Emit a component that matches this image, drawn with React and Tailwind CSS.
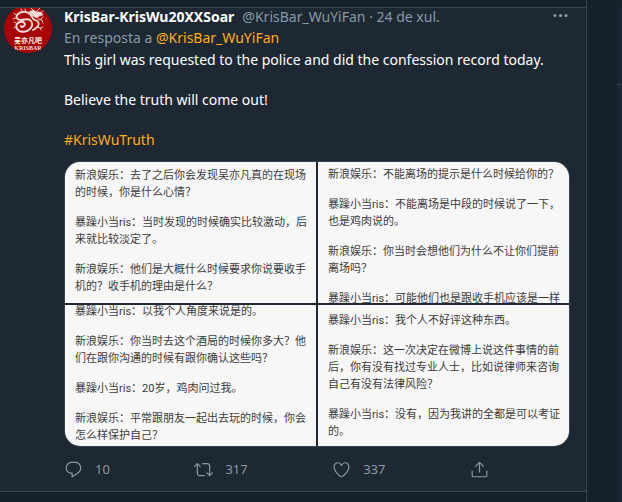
const REPLY =
  "M14.046 2.242l-4.148-.01h-.002c-4.374 0-7.8 3.427-7.8 7.802 0 4.098 3.186 7.206 7.465 7.37v3.828c0 .108.044.286.12.403.142.225.384.347.632.347.138 0 .277-.038.402-.118.264-.168 6.473-4.14 8.088-5.506 1.902-1.61 3.04-3.97 3.043-6.312v-.017c-.006-4.367-3.43-7.787-7.8-7.788zm3.787 12.972c-1.134.96-4.862 3.405-6.772 4.643V16.67c0-.414-.335-.75-.75-.75h-.396c-3.66 0-6.318-2.476-6.318-5.886 0-3.534 2.768-6.302 6.3-6.302l4.147.01h.002c3.532 0 6.3 2.766 6.302 6.296-.003 1.91-.942 3.844-2.514 5.176z";
const RETWEET =
  "M23.77 15.67c-.292-.293-.767-.293-1.06 0l-2.22 2.22V7.65c0-2.068-1.683-3.75-3.75-3.75h-5.85c-.414 0-.75.336-.75.75s.336.75.75.75h5.85c1.24 0 2.25 1.01 2.25 2.25v10.24l-2.22-2.22c-.293-.293-.768-.293-1.06 0s-.294.768 0 1.06l3.5 3.5c.145.147.337.22.53.22s.383-.072.53-.22l3.5-3.5c.294-.292.294-.767 0-1.06zm-10.66 3.28H7.26c-1.24 0-2.25-1.01-2.25-2.25V6.46l2.22 2.22c.148.147.34.22.532.22s.384-.073.53-.22c.293-.293.293-.768 0-1.06l-3.5-3.5c-.293-.294-.768-.294-1.06 0l-3.5 3.5c-.294.292-.294.767 0 1.06s.767.293 1.06 0l2.22-2.22V16.7c0 2.068 1.683 3.75 3.75 3.75h5.85c.414 0 .75-.336.75-.75s-.337-.75-.75-.75z";
const HEART =
  "M12 21.638h-.014C9.403 21.59 1.95 14.856 1.95 8.478c0-3.064 2.525-5.754 5.403-5.754 2.29 0 3.83 1.58 4.646 2.73.814-1.148 2.354-2.73 4.645-2.73 2.88 0 5.404 2.69 5.404 5.755 0 6.376-7.454 13.11-10.037 13.157H12zM7.354 4.225c-2.08 0-3.903 1.988-3.903 4.255 0 5.74 7.034 11.596 8.55 11.658 1.518-.062 8.55-5.917 8.55-11.658 0-2.267-1.823-4.255-3.903-4.255-2.528 0-3.94 2.936-3.952 2.965-.23.562-1.156.562-1.387 0-.014-.03-1.425-2.965-3.954-2.965z";
const SHARE =
  "M17.53 7.47l-5-5c-.293-.293-.768-.293-1.06 0l-5 5c-.294.293-.294.768 0 1.06s.767.294 1.06 0l3.72-3.72V15c0 .414.336.75.75.75s.75-.336.75-.75V4.81l3.72 3.72c.146.147.338.22.53.22s.384-.072.53-.22c.293-.293.293-.767 0-1.06zM19.708 21.944H4.292C3.028 21.944 2 20.916 2 19.652V14c0-.414.336-.75.75-.75s.75.336.75.75v5.652c0 .437.355.792.792.792h15.416c.437 0 .792-.355.792-.792V14c0-.414.336-.75.75-.75s.75.336.75.75v5.652c0 1.264-1.028 2.292-2.292 2.292z";

const actions = [
  { label: "Respon", path: REPLY, count: 10 },
  { label: "Retuita", path: RETWEET, count: 317 },
  { label: "M'agrada", path: HEART, count: 337 },
  { label: "Comparteix", path: SHARE },
];

// each shot is a list of paragraphs, each paragraph a list of lines
const shots = [
  {
    pad: "pt-[5px] pl-2.5",
    text: [
      ["新浪娱乐：去了之后你会发现吴亦凡真的在现场", "的时候，你是什么心情？"],
      ["暴躁小当ris：当时发现的时候确实比较激动，后", "来就比较淡定了。"],
      ["新浪娱乐：他们是大概什么时候要求你说要收手", "机的？收手机的理由是什么？"],
    ],
  },
  {
    pad: "pt-1 pl-2.5",
    text: [
      ["新浪娱乐：不能离场的提示是什么时候给你的？"],
      ["暴躁小当ris：不能离场是中段的时候说了一下，", "也是鸡肉说的。"],
      ["新浪娱乐：你当时会想他们为什么不让你们提前", "离场吗？"],
      ["暴躁小当ris：可能他们也是跟收手机应该是一样"],
    ],
  },
  {
    pad: "-mt-0.5 pl-2.5",
    text: [
      ["暴躁小当ris：以我个人角度来说是的。"],
      ["新浪娱乐：你当时去这个酒局的时候你多大？他", "们在跟你沟通的时候有跟你确认这些吗？"],
      ["暴躁小当ris：20岁，鸡肉问过我。"],
      ["新浪娱乐：平常跟朋友一起出去玩的时候，你会", "怎么样保护自己？"],
    ],
  },
  {
    pad: "pt-[7px] pl-2.5",
    text: [
      ["暴躁小当ris：我个人不好评这种东西。"],
      ["新浪娱乐：这一次决定在微博上说这件事情的前", "后，你有没有找过专业人士，比如说律师来咨询", "自己有没有法律风险？"],
      ["暴躁小当ris：没有，因为我讲的全都是可以考证", "的。"],
    ],
  },
];

function Avatar() {
  return (
    <svg viewBox="0 0 48 48" className="w-12 h-12 rounded-full" role="img" aria-label="KrisBar">
      <rect width="48" height="48" fill="#a80407" />
      <g fill="none" stroke="#f3dcd6" strokeLinecap="round" strokeLinejoin="round">
        {/* coiled body */}
        <path d="M26 9c-3-3-9-3-12 0s-1 6 3 6 6-2 9 0 3 6 0 9-9 4-12 1-2-7 2-8 6 2 4 4-3 1-3 0" strokeWidth="1.9" />
        <path d="M26 9c2 2 2 5 5 6s5 3 3 6-4 3-5 4" strokeWidth="1.8" />
        {/* head and horns */}
        <path d="M25 7l4-2 4 2 4 0 2 3-4 1-2 2-4-2z" fill="#f3dcd6" strokeWidth="0.6" />
        <path d="M29 5l-2-2M33 6l3-3M38 7l2-2" strokeWidth="0.9" />
        {/* claws, mane and whiskers */}
        <path d="M34 14l4 1 1 3M36 15l3-3M33 22l4 1 2-1M36 23l1 2M12 10l-2-2M12 13l-3 1M18 6l-1-2M22 7l-1-3M12 18l-2-1M12 22l-2 1" strokeWidth="0.9" />
      </g>
      <text x="24" y="38" textAnchor="middle" fontSize="7" fontWeight="700" fill="#fbeeea" fontFamily="Noto Sans CJK SC, sans-serif">
        吴亦凡吧
      </text>
      <text x="24" y="45" textAnchor="middle" fontSize="6" fontWeight="700" fill="#f3dcd6" fontFamily="Liberation Serif, serif">
        KRISBAR
      </text>
    </svg>
  );
}

function Action({ label, path, count }) {
  return (
    <button aria-label={label} className="flex items-center gap-3 text-[13px] leading-5">
      <svg viewBox="0 0 24 24" className="w-[19px] h-[19px] fill-current">
        <path d={path} />
      </svg>
      {count && <span>{count}</span>}
    </button>
  );
}

function Shot({ pad, text }) {
  return (
    <div className="bg-[#f7f7f7] overflow-hidden min-w-0">
      <div className={`${pad} flex flex-col gap-[13px] whitespace-nowrap text-[11px] leading-[17px] text-[#3c3c3c] font-['Roboto','Noto_Sans_CJK_SC',sans-serif]`}>
        {text.map((lines, i) => (
          <p key={i}>
            {lines.map((line) => (
              <span key={line} className="block">{line}</span>
            ))}
          </p>
        ))}
      </div>
    </div>
  );
}

function Tweet() {
  return (
    <article className="flex gap-3 pl-1 pr-4 bg-[#1e2832] border-y border-[#38444d] overflow-hidden">
      <a href="#profile" className="shrink-0 -mt-[3px]">
        <Avatar />
      </a>
      <div className="flex-1 min-w-0">
        <div className="flex items-center justify-between h-[18px]">
          <div className="flex gap-2 whitespace-nowrap text-[#8899a6]">
            <a href="#profile" className="font-bold text-white">KrisBar-KrisWu20XXSoar</a>
            <span>@KrisBar_WuYiFan · 24 de xul.</span>
          </div>
          <button aria-label="Més" className="text-[#8899a6]">
            <svg viewBox="0 0 20 20" className="w-5 h-5 fill-current">
              <circle cx="5" cy="8.5" r="1.6" />
              <circle cx="10.5" cy="8.5" r="1.6" />
              <circle cx="16" cy="8.5" r="1.6" />
            </svg>
          </button>
        </div>
        <div className="mt-0.5 text-[#8899a6]">
          En resposta a <a href="#profile" className="text-[#ffad1f]">@KrisBar_WuYiFan</a>
        </div>
        <div className="mt-0.5 text-white">
          <p>This girl was requested to the police and did the confession record today.</p>
          <p className="mt-5">Believe the truth will come out!</p>
          <p className="mt-5">
            <a href="#tag" className="text-[#ffad1f]">#KrisWuTruth</a>
          </p>
        </div>
        <div
          lang="zh-CN"
          className="mt-[11px] grid grid-cols-2 auto-rows-[141px] gap-0.5 rounded-2xl overflow-hidden border border-[#38444d]"
        >
          {shots.map((shot, i) => (
            <Shot key={i} {...shot} />
          ))}
        </div>
        <div className="my-3 flex justify-between max-w-[425px] text-[#8899a6]">
          {actions.map((a) => (
            <Action key={a.label} {...a} />
          ))}
        </div>
      </div>
    </article>
  );
}

function App() {
  return (
    <div className="min-h-screen flex bg-[#17212b] text-[14px] leading-5 font-['Noto_Sans',sans-serif]">
      <main className="flex-1 min-w-0 pt-[7px] border-r border-[#38444d]">
        <Tweet />
      </main>
      <aside className="w-[35px] pl-[30px] pt-[7px] flex flex-col">
        <div className="flex-1 bg-[#192734]">
          <div className="h-[78px] border-b border-[#38444d]" />
        </div>
      </aside>
    </div>
  );
}

export default App;
